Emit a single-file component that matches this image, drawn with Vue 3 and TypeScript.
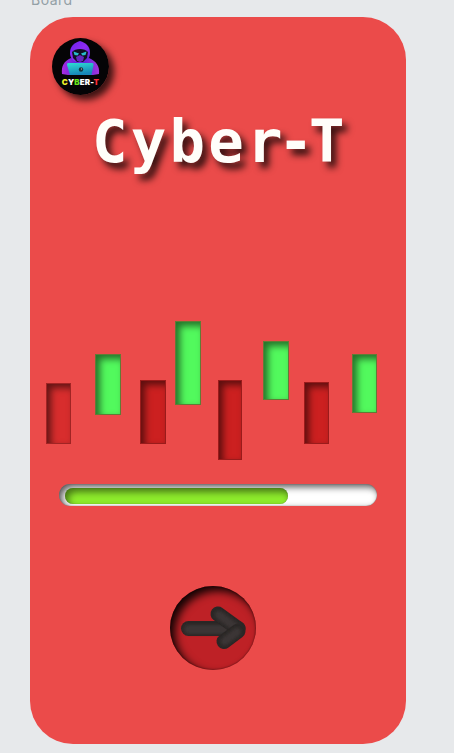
<script setup lang="ts">
interface Candle {
  tone: 'green' | 'red' | 'soft'
  gap: number
  top: number
  width: number
  height: number
}

const candles: Candle[] = [
  { tone: 'soft', gap: 16, top: 62, width: 25, height: 61 },
  { tone: 'green', gap: 24, top: 33, width: 26, height: 61 },
  { tone: 'red', gap: 19, top: 59, width: 26, height: 64 },
  { tone: 'green', gap: 9, top: 0, width: 26, height: 84 },
  { tone: 'red', gap: 17, top: 59, width: 24, height: 80 },
  { tone: 'green', gap: 21, top: 20, width: 26, height: 59 },
  { tone: 'red', gap: 15, top: 61, width: 25, height: 62 },
  { tone: 'green', gap: 23, top: 33, width: 25, height: 59 },
]

const candleStyle = (c: Candle) => ({
  marginLeft: `${c.gap}px`,
  marginTop: `${c.top}px`,
  width: `${c.width}px`,
  height: `${c.height}px`,
})

const progress = 72.6
</script>

<template>
  <div class="canvas">
    <div class="board-label">Board</div>
    <main class="board">
      <div class="logo">
        <svg viewBox="0 0 57 57" width="57" height="57">
          <defs>
            <linearGradient id="hood" x1="0" y1="0" x2="1" y2="1">
              <stop offset="0" stop-color="#6a20ec" />
              <stop offset="0.5" stop-color="#8d2cf4" />
              <stop offset="1" stop-color="#5522d8" />
            </linearGradient>
            <linearGradient id="body" x1="0" x2="1">
              <stop offset="0" stop-color="#a92be0" />
              <stop offset="0.5" stop-color="#4b22d8" />
              <stop offset="1" stop-color="#a735dc" />
            </linearGradient>
            <linearGradient id="laptop" x1="0" y1="0" x2="0.3" y2="1">
              <stop offset="0" stop-color="#2edfd2" />
              <stop offset="1" stop-color="#1785b8" />
            </linearGradient>
          </defs>
          <circle cx="28.5" cy="28.5" r="28.5" fill="#050406" />
          <path d="M10 36C9 28 12 23 19 20L28 23L37 20C44 23 48 28 47 36L41 37H16Z" fill="url(#body)" />
          <path d="M28 3C22 5 18 8 18 15C18 20 21 24 28 25C35 24 38 20 38 15C38 8 34 5 28 3Z" fill="url(#hood)" />
          <path d="M20 14C23 10 33 10 36 14L35 20L31 24H25L21 20Z" fill="#101023" />
          <path d="M24 19L28 17L32 19L31 23L28 24L25 23Z" fill="#6527bd" />
          <path d="M21.500 13.500L27 15.500L25.500 17.500L22.500 17ZM34.500 13.500L29 15.500L30.500 17.500L33.500 17Z" fill="#28bdcb" />
          <path d="M16.500 25H40Q42 25 41.500 27L39.500 37H18L15 27Q14.500 25 16.500 25Z" fill="url(#laptop)" />
          <circle cx="29" cy="31.500" r="2.200" fill="#17343f" />
          <circle cx="29.500" cy="31" r="0.700" fill="#a5afad" />
        </svg>
        <span class="logo-name"><i class="yellow">C</i>Y<i class="lime">B</i>ER-<i class="scarlet">T</i></span>
      </div>

      <h1 class="title">Cybe<span class="tight">r-</span>T</h1>

      <div class="candles">
        <div v-for="(c, i) in candles" :key="i" class="candle" :class="c.tone" :style="candleStyle(c)"></div>
      </div>

      <div class="track">
        <div class="fill" :style="{ width: `${progress}%` }"></div>
      </div>

      <button class="next" aria-label="Next">
        <svg viewBox="0 0 86 84" width="86" height="84">
          <defs>
            <filter id="soften" filterUnits="userSpaceOnUse" x="0" y="0" width="86" height="84">
              <feGaussianBlur stdDeviation="1.800" />
            </filter>
          </defs>
          <g fill="none" stroke-linecap="round" stroke-linejoin="round">
            <path d="M18.500 42.500H68" stroke="#2b2726" stroke-width="15" />
            <path d="M19 43.500H65" stroke="#3b3635" stroke-width="9" filter="url(#soften)" />
            <path d="M48 28L68 42.500" stroke="#2b2726" stroke-width="15" />
            <path d="M49 29L67 42.500" stroke="#3b3635" stroke-width="8" filter="url(#soften)" />
            <path d="M54 55.500L68 45" stroke="#2b2726" stroke-width="15" />
            <path d="M55 55L67 46" stroke="#3b3635" stroke-width="8" filter="url(#soften)" />
          </g>
        </svg>
      </button>
    </main>
  </div>
</template>

<style>
html,
body {
  margin: 0;
  overflow: hidden;
  background: #e7e9eb;
}
</style>

<style scoped>
.canvas {
  box-sizing: border-box;
  width: 454px;
  height: 753px;
  overflow: hidden;
  padding-left: 30px;
  background: #e7e9eb;
}
.board-label {
  height: 17px;
  margin-top: -10px;
  margin-bottom: 10px;
  padding-left: 1px;
  font: 14px/20px Inter, "Liberation Sans", sans-serif;
  letter-spacing: 0.5px;
  color: #93a0a6;
}
.board {
  box-sizing: border-box;
  display: flex;
  flex-direction: column;
  width: 376px;
  height: 726.500px;
  padding-top: 21px;
  border-radius: 43px;
  background: #eb4b4a;
}
.logo {
  display: grid;
  flex: none;
  width: 57px;
  height: 57px;
  margin-left: 22px;
  border-radius: 50%;
  box-shadow: 5px 5px 7px rgba(0, 0, 0, 0.75);
}
.logo > * {
  grid-area: 1 / 1;
}
.logo-name {
  align-self: end;
  justify-self: center;
  margin-bottom: 8px;
  font: 900 8px/9px Inter, "Liberation Sans", sans-serif;
  letter-spacing: 0.150px;
  color: #fff;
}
.logo-name i {
  font-style: normal;
}
.logo-name .yellow {
  color: #f0f32c;
}
.logo-name .lime {
  color: #67e51b;
}
.logo-name .scarlet {
  color: #ff2d38;
}
.title {
  flex: none;
  height: 72px;
  margin: 11px 0 0 62px;
  font: 700 59px/72px "DejaVu Sans Mono", monospace;
  letter-spacing: 3.200px;
  white-space: nowrap;
  color: #fffefa;
  text-shadow: 5px 6px 7px rgba(0, 0, 0, 0.8);
}
.tight {
  letter-spacing: -4.500px;
}
.candles {
  display: flex;
  flex: none;
  align-items: flex-start;
  height: 139px;
  margin-top: 143px;
}
.candle {
  box-sizing: border-box;
  flex: none;
  border: 1px solid rgba(60, 20, 20, 0.35);
  box-shadow: inset 4px 4px 7px rgba(0, 0, 0, 0.55);
}
.green {
  border-color: rgba(110, 20, 20, 0.55);
  background: #52f95d;
}
.red {
  background: #cc2020;
}
.soft {
  background: #d82d2d;
}
.track {
  box-sizing: border-box;
  flex: none;
  width: 318px;
  height: 22px;
  margin: 24px 0 0 29px;
  padding: 4px 5px 2px 6px;
  border-radius: 11px;
  background: #fff;
  box-shadow: inset 3px 3px 7px rgba(0, 0, 0, 0.65), inset 0 0 1px rgba(0, 0, 0, 0.6);
}
.fill {
  height: 16px;
  border-radius: 8px;
  background: #8eed2c;
  box-shadow: inset 3px 4px 7px rgba(0, 0, 0, 0.5), inset 0 0 1px rgba(0, 0, 0, 0.4);
}
.next {
  flex: none;
  width: 86px;
  height: 84px;
  margin: 80px 0 0 140px;
  padding: 0;
  border: 0;
  border-radius: 50%;
  background: #be2126;
  box-shadow: inset 5px 5px 9px rgba(0, 0, 0, 0.9), inset 0 0 2px rgba(0, 0, 0, 0.6);
}
.next svg {
  display: block;
}
</style>
